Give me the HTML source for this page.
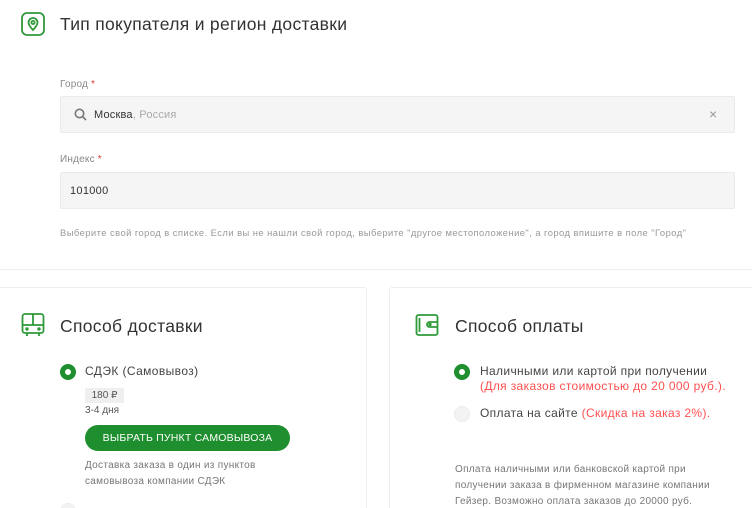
<!DOCTYPE html>
<html style="overflow:hidden;height:508px"><head><meta charset="utf-8"><style>
*{margin:0;padding:0;box-sizing:border-box}
body{width:752px;height:508px;overflow:hidden;background:#fff;font-family:"Liberation Sans","DejaVu Sans",sans-serif;color:#333;position:relative}
.a{position:absolute;white-space:nowrap}
.inp{position:absolute;left:60px;width:675px;background:#f5f5f5;border:1px solid #ebebeb;border-radius:2px}
.lbl{font-size:10px;color:#888;letter-spacing:.2px}
.lbl b{color:#e53935;font-weight:normal}
.card{position:absolute;top:287px;height:240px;border:1px solid #eceef0;border-radius:3px;background:#fff}
.h{font-size:17.5px;color:#333;letter-spacing:.3px}
.rad{position:absolute;width:16px;height:16px;border-radius:50%}
.on{border:5px solid #1e8e2e;background:#fff}
.off{background:#f3f3f3;border:1px solid #ececec}
.red{color:#ff4f4f}
</style></head><body>
<svg class="a" style="left:21px;top:12px" width="24" height="24" viewBox="0 0 24 24" fill="none" stroke="#2e9a3a" stroke-width="1.8"><rect x="1" y="1" width="22" height="22" rx="5"/><path d="M12 18c-3-3.2-4.5-5.5-4.5-7.5a4.5 4.5 0 0 1 9 0c0 2-1.5 4.3-4.5 7.5z"/><circle cx="12" cy="10.5" r="1.6"/></svg>
<div class="a h" style="left:60px;top:14px">Тип покупателя и регион доставки</div>
<div class="a lbl" style="left:60px;top:79px">Город <b>*</b></div>
<div class="inp" style="top:96px;height:37px"></div>
<svg class="a" style="left:74px;top:108px" width="13" height="13" viewBox="0 0 13 13" fill="none" stroke="#777" stroke-width="1.6"><circle cx="5.5" cy="5.5" r="4.2"/><path d="M8.6 8.6L12 12"/></svg>
<div class="a" style="left:94px;top:109px;font-size:11px;color:#333;letter-spacing:.2px">Москва<span style="color:#aaa">, Россия</span></div>
<div class="a" style="left:709px;top:106px;font-size:14px;color:#999">×</div>
<div class="a lbl" style="left:60px;top:154px">Индекс <b>*</b></div>
<div class="inp" style="top:172px;height:37px"></div>
<div class="a" style="left:70px;top:185px;font-size:11px;color:#333;letter-spacing:.3px">101000</div>
<div class="a" style="left:60px;top:227px;font-size:9.4px;color:#999;letter-spacing:.45px">Выберите свой город в списке. Если вы не нашли свой город, выберите "другое местоположение", а город впишите в поле "Город"</div>
<div class="a" style="left:0;top:269px;width:752px;height:1px;background:#eceef0"></div>

<div class="card" style="left:-10px;width:377px"></div>
<svg class="a" style="left:21px;top:313px" width="24" height="24" viewBox="0 0 24 24" fill="none" stroke="#2e9a3a" stroke-width="1.8"><rect x="1.5" y="1" width="21" height="19" rx="2.5"/><path d="M1.5 12h21M12 1v11M6 20v3M18 20v3"/><circle cx="6" cy="16" r=".8" fill="#2e9a3a"/><circle cx="18" cy="16" r=".8" fill="#2e9a3a"/></svg>
<div class="a h" style="left:60px;top:316px">Способ доставки</div>
<div class="rad on" style="left:60px;top:364px"></div>
<div class="a" style="left:85px;top:364px;font-size:12px;color:#444;letter-spacing:.4px">СДЭК (Самовывоз)</div>
<div class="a" style="left:85px;top:388px;width:39px;height:15px;background:#efefef;border-radius:2px;font-size:10px;color:#555;text-align:center;line-height:15px">180 ₽</div>
<div class="a" style="left:85px;top:405px;font-size:10px;color:#555">3-4 дня</div>
<div class="a" style="left:85px;top:425px;width:205px;height:26px;background:#1e8e2e;border-radius:13px;color:#fff;font-size:10.5px;text-align:center;line-height:26px;letter-spacing:.2px">ВЫБРАТЬ ПУНКТ САМОВЫВОЗА</div>
<div class="a" style="left:85px;top:458px;font-size:10px;color:#777;line-height:16px;letter-spacing:.3px">Доставка заказа в один из пунктов<br>самовывоза компании СДЭК</div>
<div class="a" style="left:60px;top:503px;width:16px;height:16px;border-radius:50%;background:#f3f3f3;border:1px solid #ececec"></div>

<div class="card" style="left:389px;width:380px"></div>
<svg class="a" style="left:415px;top:313px" width="24" height="24" viewBox="0 0 24 24" fill="none" stroke="#2e9a3a" stroke-width="1.8"><rect x="1.5" y="2" width="21" height="20" rx="2"/><path d="M4.5 5v14M22.5 9h-8a2 2 0 0 0 0 5h8"/><circle cx="15" cy="11.5" r=".8" fill="#2e9a3a"/></svg>
<div class="a h" style="left:455px;top:316px">Способ оплаты</div>
<div class="rad on" style="left:454px;top:364px"></div>
<div class="a" style="left:480px;top:364px;font-size:12px;color:#444;line-height:15px;letter-spacing:.35px">Наличными или картой при получении<br><span class="red">(Для заказов стоимостью до 20 000 руб.).</span></div>
<div class="rad off" style="left:454px;top:406px"></div>
<div class="a" style="left:480px;top:406px;font-size:12px;color:#444;letter-spacing:.35px">Оплата на сайте <span class="red">(Скидка на заказ 2%).</span></div>
<div class="a" style="left:455px;top:462px;font-size:10px;color:#777;line-height:16px;letter-spacing:.3px">Оплата наличными или банковской картой при<br>получении заказа в фирменном магазине компании<br>Гейзер. Возможно оплата заказов до 20000 руб.</div>
</body></html>
